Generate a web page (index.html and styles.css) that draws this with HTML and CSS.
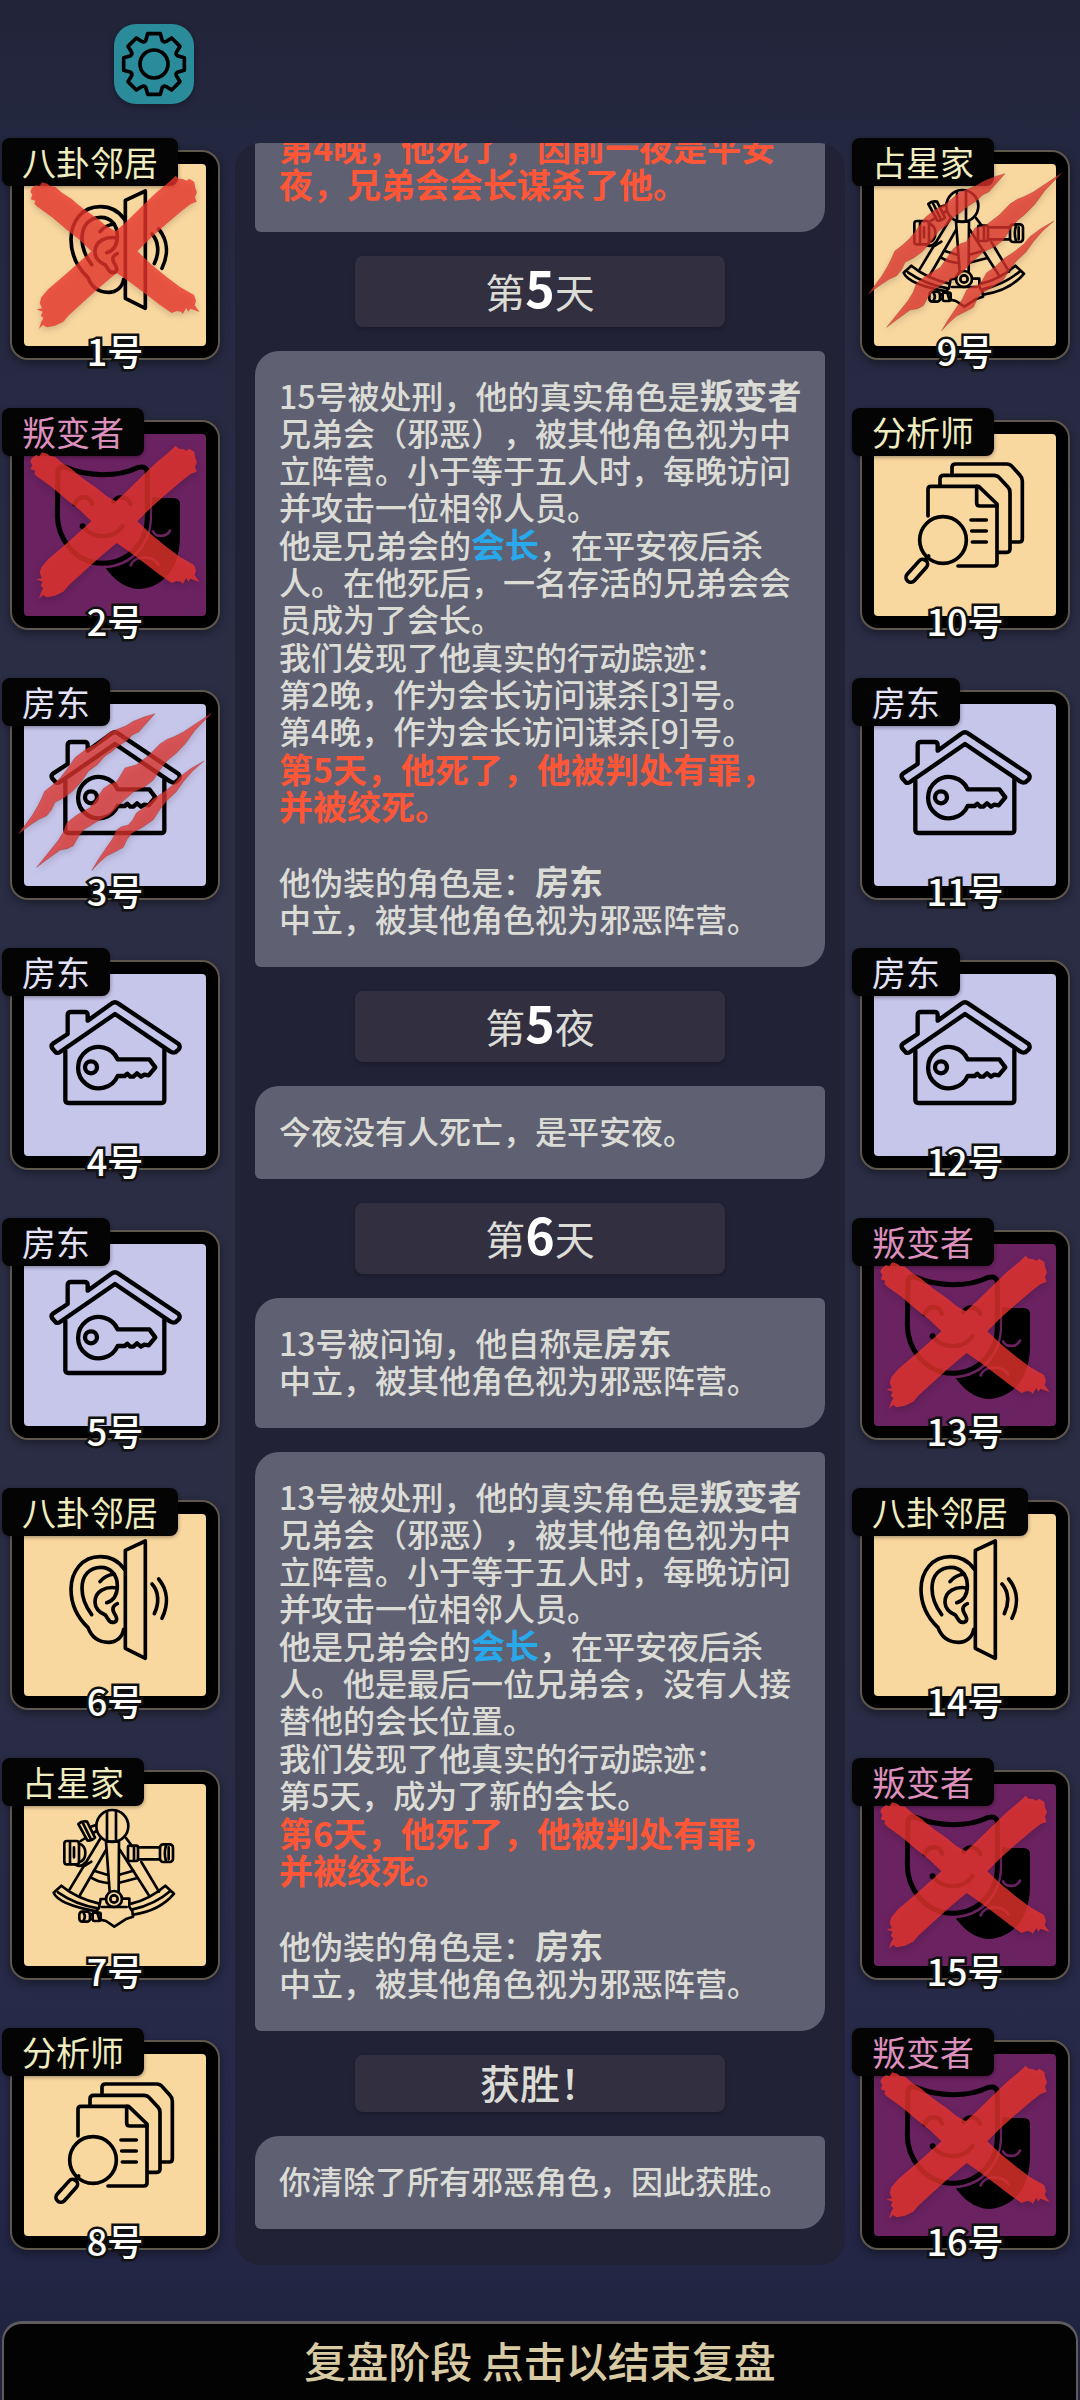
FILE: index.html
```
<!DOCTYPE html>
<html lang="zh-CN">
<head>
    <meta charset="UTF-8">
    <meta name="viewport" content="width=device-width, initial-scale=1.0">
    <title>复盘阶段</title>
    <link rel="stylesheet" href="styles.css">
</head>
<body>

    <!-- Icon definitions -->
    <svg class="icon-defs" width="0" height="0" aria-hidden="true">
        <symbol id="icon-ear" viewBox="72 102 546 546">
            <g fill="none" stroke="#000" stroke-width="11" stroke-linecap="round" stroke-linejoin="round">
                <path d="M373 268C355 241 327 230 301 230C246 230 213 275 213 328C213 380 240 420 264 443C275 472 298 487 325 487C350 487 368 470 371 448"/>
                <path d="M275 404C251 372 246 345 246 325C246 285 270 262 303 262C332 262 352 285 352 317C352 345 343 361 320 368"/>
                <path d="M300 305C311 291 325 284 343 282"/>
                <path d="M352 324C318 318 284 332 285 367C286 389 300 398 316 405C324 415 326 430 342 427C355 423 350 410 342 398C335 385 340 376 352 371"/>
                <path d="M376 211L436 183V535L376 505Z"/>
                <path d="M456 312C477 335 478 370 463 401M476 297C505 332 505 375 486 415"/>
            </g>
        </symbol>

        <symbol id="icon-mask" viewBox="102 132 546 546">
            <path d="M487 320C505 325 530 324 550 324Q570 324 570 342V440C570 525 525 593 448 597C402 597 370 565 347 535C430 530 482 465 486 390Z"/>
            <g fill="none" stroke="#000" stroke-linecap="round" stroke-linejoin="round">
                <path stroke-width="15" d="M204 240Q210 226 230 233C295 261 385 261 442 233Q466 226 472 243V385C472 445 425 519 338 520C250 519 202 440 202 375Z"/>
                <path stroke-width="13" d="M254 343C264 315 298 315 306 341M370 336C382 315 412 318 421 342M280 412C312 448 370 448 398 408"/>
            </g>
            <circle cx="278" cy="409" r="9"/>
            <path fill="none" stroke="#6a2260" stroke-width="8" stroke-linecap="round" d="M489 424C499 443 530 442 540 422M422 526C434 495 490 495 505 524"/>
        </symbol>

        <symbol id="icon-house" viewBox="0 0 546 546">
            <g fill="none" stroke="#000" stroke-width="13" stroke-linecap="round" stroke-linejoin="round">
                <path d="M96 236L84 222Q80 214 88 208L131 180V124Q131 114 141 114H182Q191 114 191 124V140L264 88Q273 81 282 88L464 210Q470 218 464 226L454 235Q446 238 438 232L273 120L108 234Q102 238 96 236Z"/>
                <path d="M124 230V378Q124 387 133 387H413Q421 387 421 378V228"/>
                <path d="M281 256A62 62 0 1 0 281 306H302L310 299L319 308L328 308L339 298L351 308L361 302L374 304L394 280L376 256Z"/>
                <circle cx="201" cy="280" r="18"/>
            </g>
        </symbol>

        <symbol id="icon-sextant" viewBox="72 102 546 546">
            <g fill="none" stroke="#000" stroke-width="8" stroke-linecap="round" stroke-linejoin="round">
                <circle cx="337" cy="228" r="48"/>
                <path d="M321 184V272M348 182V272M318 275H357L356 424M318 275L329 424"/>
                <path d="M302 264L209 418M318 300L240 435M360 300L446 435M378 264L396 288M424 336L477 425M274 335L250 350"/>
                <path d="M282 362L321 374M272 382Q295 396 323 399M358 374L400 362M358 398L412 384"/>
                <path d="M298 461Q228 444 184 407L161 428Q175 463 290 484M294 475Q225 463 174 427"/>
                <path d="M394 461Q450 447 496 407L522 431Q480 482 400 494M398 478Q465 463 512 422"/>
                <circle cx="342" cy="447" r="24"/>
                <circle cx="342" cy="447" r="11"/>
                <path d="M306 471H380M318 447H302L297 474L290 482L298 508L318 513L343 530L380 506L399 500L397 484L388 470V446H367"/>
                <rect x="193" y="273" width="44" height="70" rx="8"/>
                <path d="M210 276V340M222 292V322M237 281Q256 286 256 308Q256 332 237 337M242 273L256 264M228 345Q245 352 256 338"/>
                <path d="M235 222Q245 212 261 215L285 263Q275 274 262 271ZM248 218L273 268M270 231L288 225M279 249L290 243"/>
                <rect x="384" y="287" width="30" height="46" rx="5"/>
                <path d="M402 290V330M414 292H480M414 328H480"/>
                <rect x="480" y="283" width="39" height="53" rx="10"/>
                <path d="M498 287Q491 310 498 333M506 292V328"/>
                <rect x="238" y="485" width="32" height="30" rx="9"/>
                <path d="M251 490Q258 500 251 511M270 493H278M270 507H278"/>
                <rect x="278" y="488" width="24" height="25" rx="5"/>
            </g>
        </symbol>

        <symbol id="icon-docs" viewBox="72 912 546 546">
            <g fill="none" stroke="#000" stroke-width="11" stroke-linecap="round" stroke-linejoin="round">
                <path d="M234 1158V1078Q234 1069 243 1069H386L441 1122V1299Q441 1308 432 1308H324"/>
                <path d="M380 1069V1118Q380 1128 390 1128H441"/>
                <path d="M270 1064V1047Q270 1036 281 1036H432Q442 1036 448 1043L473 1070Q480 1077 480 1088V1257Q480 1267 470 1267H446"/>
                <path d="M306 1030V1012Q306 1002 317 1002H470Q480 1002 486 1009L510 1036Q517 1043 517 1053V1226Q517 1236 507 1236H485"/>
                <path d="M363 1170H409M365 1203H409M367 1236H409"/>
                <circle cx="279" cy="1230" r="70"/>
                <rect x="186" y="1281" width="29" height="82" rx="14" transform="rotate(42 200 1322)"/>
                <path d="M224 1290L236 1278"/>
            </g>
        </symbol>

        <!-- brush cross: executed -->
        <symbol id="mark-cross" viewBox="72 493 546 546">
            <path fill="#ea352c" fill-opacity=".78" d="M95 566L108 556L118 560L126 548L142 552L150 559L165 561L187 580L215 598L226 608L250 627L290 655L320 680L347 695L378 667L420 626L470 578L508 546L527 528L536 537L548 538L560 543L568 537L583 547L586 565L591 578L585 592L590 606L572 613L545 634L500 672L455 712L412 755L455 795L500 832L540 862L582 886L588 903L584 917L599 937L580 930L571 927L565 936L559 925L548 943L543 936L530 934L515 940L480 916L430 878L390 848L350 820L300 862L250 907L205 948L190 966L165 978L140 983L129 976L117 987L123 968L130 955L122 948L128 936L109 929L126 926L119 910L124 893L145 868L190 830L235 790L274 755L240 722L200 690L155 652L112 621L103 612L106 603L92 599L97 586L91 576Z"/>
        </symbol>

        <!-- three claw cuts: killed at night -->
        <symbol id="mark-claw" viewBox="0 0 546 546">
            <g fill="#e0332d" fill-opacity=".76" stroke="#8c2a28" stroke-opacity=".5" stroke-width="2">
                <path d="M393 29L360 39L328 52L305 66L280 76L258 84L215 120L190 133L170 148L153 161L130 194L108 223L85 244L62 262L53 283L42 305L23 337L-17 390L20 362L45 346L68 335L82 318L93 295L120 281L143 264L170 236L193 202L220 182L243 156L262 144L280 128L308 110L326 92L344 84L358 68Z"/>
                <path d="M563 27L520 56L478 84L450 98L430 106L408 120L375 154L338 182L303 192L290 214L278 233L258 240L238 254L215 288L198 311L160 332L128 357L118 384L103 409L75 444L38 490L70 466L108 438L130 434L148 425L162 400L178 378L220 352L258 332L290 298L328 264L362 248L388 228L406 200L428 171L454 150L483 120L512 80Z"/>
                <path d="M540 171L500 194L468 218L450 240L420 264L388 285L362 310L338 326L326 348L313 363L292 368L278 378L266 404L248 430L222 468L203 500L225 476L248 456L276 442L298 430L308 408L323 388L358 368L388 347L408 316L428 290L456 264L478 233L505 202Z"/>
            </g>
        </symbol>
    </svg>

    <header class="topbar">
        <button class="settings" type="button" aria-label="设置">
            <svg viewBox="-120 -120 240 240" aria-hidden="true">
                <g fill="none" stroke="#000" stroke-width="11" stroke-linejoin="round">
                    <path d="M-19 -91H19L25 -70Q29 -64 37 -68L53 -78L78 -53L68 -37Q64 -29 70 -25L91 -19V19L70 25Q64 29 68 37L78 53L53 78L37 68Q29 64 25 70L19 91H-19L-25 70Q-29 64 -37 68L-53 78L-78 53L-68 37Q-64 29 -70 25L-91 19V-19L-70 -25Q-64 -29 -68 -37L-78 -53L-53 -78L-37 -68Q-29 -64 -25 -70Z"/>
                    <circle r="42"/>
                </g>
            </svg>
        </button>
    </header>

    <main class="board">
        <!-- Seats 1 - 8 -->
        <ul class="seats">
            <li class="seat town">
                <div class="frame"><svg class="role"><use href="#icon-ear"/></svg></div>
                <span class="name">八卦邻居</span>
                <svg class="mark"><use href="#mark-cross"/></svg>
                <span class="number">1号</span>
            </li>
            <li class="seat evil">
                <div class="frame"><svg class="role"><use href="#icon-mask"/></svg></div>
                <span class="name">叛变者</span>
                <svg class="mark"><use href="#mark-cross"/></svg>
                <span class="number">2号</span>
            </li>
            <li class="seat neutral">
                <div class="frame"><svg class="role"><use href="#icon-house"/></svg></div>
                <span class="name">房东</span>
                <svg class="mark"><use href="#mark-claw"/></svg>
                <span class="number">3号</span>
            </li>
            <li class="seat neutral">
                <div class="frame"><svg class="role"><use href="#icon-house"/></svg></div>
                <span class="name">房东</span>
                <span class="number">4号</span>
            </li>
            <li class="seat neutral">
                <div class="frame"><svg class="role"><use href="#icon-house"/></svg></div>
                <span class="name">房东</span>
                <span class="number">5号</span>
            </li>
            <li class="seat town">
                <div class="frame"><svg class="role"><use href="#icon-ear"/></svg></div>
                <span class="name">八卦邻居</span>
                <span class="number">6号</span>
            </li>
            <li class="seat town">
                <div class="frame"><svg class="role"><use href="#icon-sextant"/></svg></div>
                <span class="name">占星家</span>
                <span class="number">7号</span>
            </li>
            <li class="seat town">
                <div class="frame"><svg class="role"><use href="#icon-docs"/></svg></div>
                <span class="name">分析师</span>
                <span class="number">8号</span>
            </li>
        </ul>

        <!-- Game log, scrolled to the end -->
        <section class="log">
            <article class="entry">
                <p class="death">第4晚，他死了，因前一夜是平安<br>夜，兄弟会会长谋杀了他。</p>
            </article>

            <h2 class="phase">第<strong>5</strong>天</h2>

            <article class="entry">
                <p>15号被处刑，他的真实角色是<b>叛变者</b><br>兄弟会（邪恶），被其他角色视为中<br>立阵营。小于等于五人时，每晚访问<br>并攻击一位相邻人员。</p>
                <p>他是兄弟会的<b class="leader">会长</b>，在平安夜后杀<br>人。在他死后，一名存活的兄弟会会<br>员成为了会长。</p>
                <p>我们发现了他真实的行动踪迹：<br>第2晚，作为会长访问谋杀[3]号。<br>第4晚，作为会长访问谋杀[9]号。</p>
                <p class="death">第5天，他死了，他被判处有罪，<br>并被绞死。</p>
                <p class="disguise">他伪装的角色是：<b>房东</b><br>中立，被其他角色视为邪恶阵营。</p>
            </article>

            <h2 class="phase">第<strong>5</strong>夜</h2>

            <article class="entry">
                <p>今夜没有人死亡，是平安夜。</p>
            </article>

            <h2 class="phase">第<strong>6</strong>天</h2>

            <article class="entry">
                <p>13号被问询，他自称是<b>房东</b><br>中立，被其他角色视为邪恶阵营。</p>
            </article>

            <article class="entry">
                <p>13号被处刑，他的真实角色是<b>叛变者</b><br>兄弟会（邪恶），被其他角色视为中<br>立阵营。小于等于五人时，每晚访问<br>并攻击一位相邻人员。</p>
                <p>他是兄弟会的<b class="leader">会长</b>，在平安夜后杀<br>人。他是最后一位兄弟会，没有人接<br>替他的会长位置。</p>
                <p>我们发现了他真实的行动踪迹：<br>第5天，成为了新的会长。</p>
                <p class="death">第6天，他死了，他被判处有罪，<br>并被绞死。</p>
                <p class="disguise">他伪装的角色是：<b>房东</b><br>中立，被其他角色视为邪恶阵营。</p>
            </article>

            <h2 class="phase result">获胜！</h2>

            <article class="entry">
                <p>你清除了所有邪恶角色，因此获胜。</p>
            </article>
        </section>

        <!-- Seats 9 - 16 -->
        <ul class="seats">
            <li class="seat town">
                <div class="frame"><svg class="role"><use href="#icon-sextant"/></svg></div>
                <span class="name">占星家</span>
                <svg class="mark"><use href="#mark-claw"/></svg>
                <span class="number">9号</span>
            </li>
            <li class="seat town">
                <div class="frame"><svg class="role"><use href="#icon-docs"/></svg></div>
                <span class="name">分析师</span>
                <span class="number">10号</span>
            </li>
            <li class="seat neutral">
                <div class="frame"><svg class="role"><use href="#icon-house"/></svg></div>
                <span class="name">房东</span>
                <span class="number">11号</span>
            </li>
            <li class="seat neutral">
                <div class="frame"><svg class="role"><use href="#icon-house"/></svg></div>
                <span class="name">房东</span>
                <span class="number">12号</span>
            </li>
            <li class="seat evil">
                <div class="frame"><svg class="role"><use href="#icon-mask"/></svg></div>
                <span class="name">叛变者</span>
                <svg class="mark"><use href="#mark-cross"/></svg>
                <span class="number">13号</span>
            </li>
            <li class="seat town">
                <div class="frame"><svg class="role"><use href="#icon-ear"/></svg></div>
                <span class="name">八卦邻居</span>
                <span class="number">14号</span>
            </li>
            <li class="seat evil">
                <div class="frame"><svg class="role"><use href="#icon-mask"/></svg></div>
                <span class="name">叛变者</span>
                <svg class="mark"><use href="#mark-cross"/></svg>
                <span class="number">15号</span>
            </li>
            <li class="seat evil">
                <div class="frame"><svg class="role"><use href="#icon-mask"/></svg></div>
                <span class="name">叛变者</span>
                <svg class="mark"><use href="#mark-cross"/></svg>
                <span class="number">16号</span>
            </li>
        </ul>
    </main>

    <footer class="bottombar">
        <button class="finish" type="button">复盘阶段 点击以结束复盘</button>
    </footer>

</body>
</html>
```

FILE: styles.css
```
* {
    box-sizing: border-box;
}
body {
    margin: 0;
    height: 100vh;
    display: flex;
    flex-direction: column;
    overflow: hidden;
    font-family: "Noto Sans CJK SC", "Noto Sans", sans-serif;
    font-weight: 500;
    text-spacing-trim: space-all;
    color: #dcdcd7;
    background: linear-gradient(#222439 0%, #23273f 6%, #252841 10%, #2b2d45 28%, #2b2d44 68%, #25284a 90%, #212440 97%, #232438 100%);
}
button {
    font-family: inherit;
    border: none;
    cursor: pointer;
}
.icon-defs {
    position: absolute;
}

/* Top bar */
.topbar {
    padding: 24px 114px 34px;
}
.settings {
    display: block;
    width: 80px;
    height: 80px;
    padding: 0;
    border-radius: 22px;
    background-color: #2a8c9b;
    box-shadow: 0 2px 6px rgba(0,0,0,0.3);
}
.settings svg {
    display: block;
    width: 100%;
    height: 100%;
}

/* Board */
.board {
    flex: 1;
    min-height: 0;
    display: grid;
    grid-template-columns: 217px minmax(0, 1fr) 217px;
    grid-template-rows: minmax(0, 1fr);
    padding: 0 11px 56px 2px;
}

/* Seats */
.seats {
    list-style: none;
    margin: 0;
    padding: 0;
    display: flex;
    flex-direction: column;
    gap: 50px;
}
.seat {
    position: relative;
    padding: 14px 1px 0 10px;
}
.frame {
    height: 206px;
    border: 12px solid #000;
    border-radius: 16px;
    box-shadow: 0 0 0 2px #5e584c, 0 3px 8px 2px rgba(0,0,0,0.4);
}
.role {
    display: block;
    width: 182px;
    height: 182px;
}
.name {
    position: absolute;
    top: 0;
    left: 0;
    padding: 0 20px;
    border-radius: 8px;
    background-color: #040404;
    box-shadow: 0 1px 4px rgba(0,0,0,0.4);
    font-size: 34px;
    font-weight: normal;
    line-height: 48px;
}
.mark {
    position: absolute;
    top: 26px;
    left: 22px;
    width: 182px;
    height: 182px;
    overflow: visible;
    filter: drop-shadow(0 3px 3px rgba(0,0,0,0.2));
}
#mark-claw,
#mark-cross {
    overflow: visible;
}
.number {
    position: absolute;
    bottom: -16px;
    left: 10px;
    right: 1px;
    text-align: center;
    font-size: 36px;
    line-height: 48px;
    color: #fff;
    -webkit-text-stroke: 5px #111;
    paint-order: stroke fill;
}
.town .frame {
    background-color: #f9d8a0;
}
.town .name {
    color: #efedbf;
}
.evil .frame {
    background-color: #6a2260;
}
.evil .name {
    color: #dc8fbd;
}
.neutral .frame {
    background-color: #c6c5ea;
}
.neutral .name {
    color: #e2e1f6;
}

/* Log */
.log {
    margin: 5px 7px 0 16px;
    padding: 0 20px 36px;
    display: flex;
    flex-direction: column;
    justify-content: flex-end;
    gap: 24px;
    overflow: hidden;
    border-radius: 26px;
    background-color: #222237;
}
.entry {
    flex-shrink: 0;
    display: flex;
    flex-direction: column;
    gap: 1px;
    padding: 26px 0 30px 24px;
    border-radius: 24px 6px 24px 6px;
    background-color: #5f6173;
    font-size: 32px;
    line-height: 37px;
    white-space: nowrap;
}
.entry p {
    margin: 0;
}
.entry b {
    font-size: 34px;
    line-height: 1;
}
.entry .leader {
    color: #27a9ec;
}
.entry .death {
    font-size: 34px;
    font-weight: bold;
    color: #ff5638;
}
.entry .disguise {
    margin-top: 38px;
}
.phase {
    flex-shrink: 0;
    align-self: center;
    width: 65%;
    margin: 0;
    padding: 5px 0 7px;
    border-radius: 8px;
    background-color: #323040;
    box-shadow: 0 2px 4px rgba(0,0,0,0.25);
    text-align: center;
    font-size: 40px;
    font-weight: normal;
    line-height: 58px;
}
.phase strong {
    font-size: 50px;
    line-height: 1;
    color: #fff;
}
.phase.result {
    font-weight: 500;
    line-height: 45px;
}

/* Bottom bar */
.bottombar {
    padding: 0 2px;
}
.finish {
    display: block;
    width: 100%;
    height: 79px;
    padding: 0 0 4px;
    border: 2px solid #5f5c60;
    border-top-width: 3px;
    border-bottom: none;
    border-radius: 20px 20px 0 0;
    background-color: #040304;
    color: #d8caa3;
    font-size: 42px;
    font-weight: 500;
    line-height: 60px;
}
```
